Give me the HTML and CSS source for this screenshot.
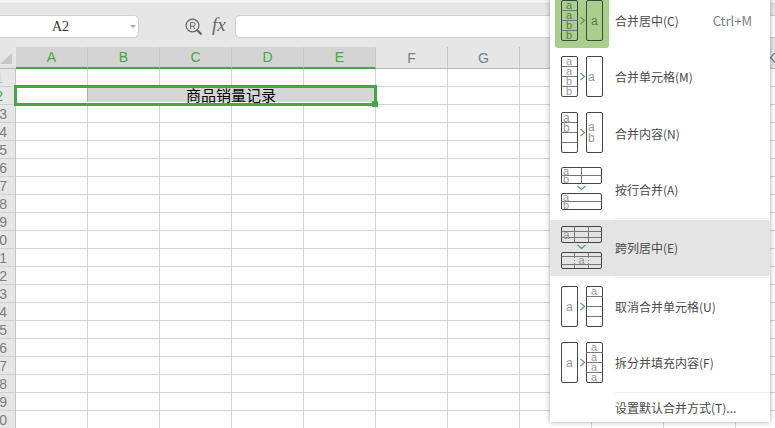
FILE: index.html
```html
<!DOCTYPE html>
<html lang="zh-CN">
<head>
<meta charset="utf-8">
<title>合并居中</title>
<link rel="stylesheet" href="styles.css">
</head>
<body>
<div class="app">
  <div class="top-strip"></div>
  <div class="formula-bar">
    <div class="name-box"><span class="name-text">A2</span><span class="name-arrow"></span></div>
    <div class="formula-tools">
      <svg class="zoom-icon" width="18" height="18" viewBox="0 0 18 18" fill="none" stroke="#666">
        <circle cx="7.5" cy="7.5" r="6.4" stroke-width="1.2"/>
        <path d="M5.5 11V4.5h2.8a1.7 1.7 0 0 1 0 3.6H5.5M8.2 8.1 10 11" stroke-width="1"/>
        <path d="M12 12l4.5 4.5" stroke-width="2.2"/>
      </svg>
      <span class="fx">fx</span>
    </div>
    <div class="formula-input"></div>
  </div>
  <div class="col-header">
    <div class="corner"><span class="corner-tri"></span></div>
    <div class="col sel">A</div>
    <div class="col sel">B</div>
    <div class="col sel">C</div>
    <div class="col sel">D</div>
    <div class="col sel">E</div>
    <div class="col">F</div>
    <div class="col">G</div>
    <div class="col">H</div>
    <div class="col">I</div>
    <div class="col">J</div>
    <div class="col">K</div>
  </div>
  <div class="sheet">
    <div class="row-header">
      <div class="rownum r1"><span>1</span></div>
      <div class="rownum r2"><span>2</span></div>
      <div class="rownum"><span>3</span></div>
      <div class="rownum"><span>4</span></div>
      <div class="rownum"><span>5</span></div>
      <div class="rownum"><span>6</span></div>
      <div class="rownum"><span>7</span></div>
      <div class="rownum"><span>8</span></div>
      <div class="rownum"><span>9</span></div>
      <div class="rownum"><span>10</span></div>
      <div class="rownum"><span>11</span></div>
      <div class="rownum"><span>12</span></div>
      <div class="rownum"><span>13</span></div>
      <div class="rownum"><span>14</span></div>
      <div class="rownum"><span>15</span></div>
      <div class="rownum"><span>16</span></div>
      <div class="rownum"><span>17</span></div>
      <div class="rownum"><span>18</span></div>
      <div class="rownum"><span>19</span></div>
      <div class="rownum"><span>20</span></div>
    </div>
    <div class="grid">
      <div class="selection">
        <div class="sel-first"></div>
        <div class="sel-merged">商品销量记录</div>
        <div class="sel-handle"></div>
      </div>
    </div>
  </div>

  <div class="menu">
    <div class="item">
      <div class="icon-cell active">
        <svg class="ic" width="54" height="56" viewBox="0 0 54 56">
          <rect class="box" x="6.5" y="8.5" width="16" height="40" rx="1.5"/>
          <path class="ln" d="M6.5 18.5h16M6.5 28.5h16M6.5 38.5h16"/>
          <text class="lt" x="11" y="17">a</text><text class="lt" x="11" y="27">a</text><text class="lt" x="11" y="37">b</text><text class="lt" x="11" y="47">b</text>
          <rect class="box" x="31.5" y="8.5" width="16" height="40" rx="1.5"/>
          <text class="lt big" x="36" y="33">a</text>
          <polyline class="chev" points="25.5,25 29.5,28.5 25.5,32"/>
        </svg>
      </div>
      <span class="label">合并居中(C)</span>
      <span class="shortcut">Ctrl+M</span>
    </div>
    <div class="item">
      <div class="icon-cell">
        <svg class="ic" width="54" height="56" viewBox="0 0 54 56">
          <rect class="box" x="6.5" y="8.5" width="16" height="40" rx="1.5"/>
          <path class="ln" d="M6.5 18.5h16M6.5 28.5h16M6.5 38.5h16"/>
          <text class="lt" x="11" y="17">a</text><text class="lt" x="11" y="27">a</text><text class="lt" x="11" y="37">b</text><text class="lt" x="11" y="47">b</text>
          <rect class="box" x="31.5" y="8.5" width="16" height="40" rx="1.5"/>
          <text class="lt big" x="33" y="33">a</text>
          <polyline class="chev" points="25.5,25 29.5,28.5 25.5,32"/>
        </svg>
      </div>
      <span class="label">合并单元格(M)</span>
    </div>
    <div class="item">
      <div class="icon-cell">
        <svg class="ic" width="54" height="56" viewBox="0 0 54 56">
          <rect class="box" x="6.5" y="8.5" width="16" height="40" rx="1.5"/>
          <path class="ln" d="M6.5 18.5h16M6.5 28.5h16M6.5 38.5h16"/>
          <text class="lt big" x="8" y="18">a</text><text class="lt big" x="8" y="28">b</text>
          <rect class="box" x="31.5" y="8.5" width="16" height="40" rx="1.5"/>
          <text class="lt big" x="33" y="27">a</text><text class="lt big" x="33" y="38">b</text>
          <polyline class="chev" points="25.5,25 29.5,28.5 25.5,32"/>
        </svg>
      </div>
      <span class="label low">合并内容(N)</span>
    </div>
    <div class="item">
      <div class="icon-cell">
        <svg class="ic" width="54" height="56" viewBox="0 0 54 56">
          <rect class="box" x="6.5" y="7.5" width="40" height="16" rx="1.5"/>
          <path class="ln" d="M6.5 15.5h40M26.5 7.5v16"/>
          <text class="lt" x="8" y="15">a</text><text class="lt" x="8" y="23">b</text>
          <polyline class="chev" points="22.5,26 26.5,29.5 30.5,26"/>
          <rect class="box" x="6.5" y="33.5" width="40" height="16" rx="1.5"/>
          <path class="ln" d="M6.5 41.5h40"/>
          <text class="lt" x="8" y="41">a</text><text class="lt" x="8" y="49">b</text>
        </svg>
      </div>
      <span class="label low">按行合并(A)</span>
    </div>
    <div class="sep sep-a"></div>
    <div class="item hover">
      <div class="icon-cell">
        <svg class="ic" width="54" height="56" viewBox="0 0 54 56">
          <rect class="box" x="6.5" y="6.5" width="40" height="16" rx="1.5"/>
          <path class="ln" d="M6.5 11.5h40M6.5 17.5h40M19.5 6.5v16M33.5 6.5v16"/>
          <text class="lt big" x="8" y="18.500">a</text>
          <polyline class="chev" points="22.5,25 26.5,28.5 30.5,25"/>
          <rect class="box" x="6.500" y="32.500" width="40" height="16" rx="1.5"/>
          <path class="ln" d="M6.5 36.500h40M6.500 44.500h40M19.500 32.500v4M33.500 32.500v4M19.500 44.500v4M33.500 44.500v4"/>
          <path class="dash" d="M19.500 37v7M33.500 37v7"/>
          <text class="lt" x="23.500" y="44">a</text>
        </svg>
      </div>
      <span class="label high">跨列居中(E)</span>
    </div>
    <div class="sep sep-b"></div>
    <div class="item">
      <div class="icon-cell">
        <svg class="ic" width="54" height="56" viewBox="0 0 54 56">
          <rect class="box" x="6.5" y="8.5" width="16" height="40" rx="1.500"/>
          <text class="lt big" x="11" y="33">a</text>
          <polyline class="chev" points="25.5,25 29.5,28.5 25.5,32"/>
          <rect class="box" x="31.5" y="8.5" width="16" height="40" rx="1.5"/>
          <path class="ln" d="M31.5 18.5h16M31.5 28.5h16M31.5 38.5h16"/>
          <text class="lt" x="36" y="17">a</text>
        </svg>
      </div>
      <span class="label">取消合并单元格(U)</span>
    </div>
    <div class="item">
      <div class="icon-cell">
        <svg class="ic" width="54" height="56" viewBox="0 0 54 56">
          <rect class="box" x="6.5" y="8.5" width="16" height="40" rx="1.5"/>
          <text class="lt big" x="11" y="33">a</text>
          <polyline class="chev" points="25.5,25 29.5,28.5 25.5,32"/>
          <rect class="box" x="31.5" y="8.5" width="16" height="40" rx="1.5"/>
          <path class="ln" d="M31.5 18.5h16M31.5 28.5h16M31.5 38.5h16"/>
          <text class="lt" x="36" y="17">a</text><text class="lt" x="36" y="27">a</text><text class="lt" x="36" y="37">a</text><text class="lt" x="36" y="47">a</text>
        </svg>
      </div>
      <span class="label">拆分并填充内容(F)</span>
    </div>
    <div class="sep sep-c"></div>
    <div class="item-foot"><span class="label">设置默认合并方式(T)...</span></div>
  </div>
</div>
</body>
</html>
```

FILE: styles.css
```css
html, body {
  margin: 0;
  padding: 0;
  width: 775px;
  height: 428px;
  overflow: hidden;
  background: #fff;
}

.app {
  position: relative;
  width: 775px;
  height: 428px;
  overflow: hidden;
  display: flex;
  flex-direction: column;
  font-family: "Liberation Sans", "Noto Sans CJK SC", sans-serif;
}

.top-strip {
  height: 3px;
  background: #f4f4f4;
  border-bottom: 1px solid #e0e0e0;
  flex: none;
}

.formula-bar {
  flex: none;
  height: 43px;
  box-sizing: border-box;
  background: #e6e6e6;
  padding: 11px 0 9px;
  display: flex;
  align-items: stretch;
}

.name-box {
  width: 147px;
  margin-left: -8px;
  box-sizing: border-box;
  background: #fff;
  border: 1px solid #cfcfcf;
  border-radius: 5px;
  display: flex;
  align-items: center;
  flex: none;
}

.name-text {
  font-family: "Liberation Serif", serif;
  font-size: 14px;
  color: #333;
  margin-left: 59px;
}

.name-arrow {
  margin-left: auto;
  margin-right: 2px;
  width: 0;
  height: 0;
  border-left: 3px solid transparent;
  border-right: 3px solid transparent;
  border-top: 3px solid #a8a8a8;
}

.formula-tools {
  width: 96px;
  flex: none;
  display: flex;
  align-items: center;
  box-sizing: border-box;
  padding-left: 46px;
}

.zoom-icon {
  flex: none;
}

.fx {
  font-family: "Liberation Serif", serif;
  font-style: italic;
  font-size: 19px;
  color: #666;
  margin-left: 9px;
  padding-bottom: 3px;
}

.formula-input {
  flex: 1;
  margin-right: -8px;
  background: #fff;
  border: 1px solid #cfcfcf;
  border-radius: 5px;
}

.col-header {
  flex: none;
  display: flex;
  height: 22px;
  background: #e6e6e6;
}

.corner {
  flex: none;
  width: 16px;
  box-sizing: border-box;
  border-bottom: 1px solid #b8b8b8;
  position: relative;
  overflow: hidden;
}

.corner-tri {
  position: absolute;
  right: 4px;
  bottom: 4px;
  width: 0;
  height: 0;
  border-left: 12px solid transparent;
  border-bottom: 11px solid #c6c6c6;
}

.col {
  flex: none;
  width: 72px;
  box-sizing: border-box;
  border-right: 1px solid #c6c6c6;
  border-bottom: 1px solid #b8b8b8;
  display: flex;
  align-items: center;
  justify-content: center;
  font-size: 14px;
  color: #74808c;
}

.col.sel {
  background: #d4d4d4;
  color: #43a648;
  border-bottom: 2px solid #43a648;
}

.sheet {
  flex: 1;
  display: flex;
  min-height: 0;
}

.row-header {
  flex: none;
  width: 16px;
  box-sizing: border-box;
  background: #e6e6e6;
  border-right: 1px solid #c6c6c6;
}

.rownum {
  height: 18px;
  width: 15px;
  overflow: hidden;
  box-sizing: border-box;
  border-bottom: 1px solid #d0d0d0;
  display: flex;
  justify-content: flex-end;
  align-items: center;
  padding-right: 8px;
  font-size: 14px;
  color: #807c78;
}

.rownum span {
  flex: none;
}

.rownum.r1 {
  padding-right: 12px;
  color: #8fc4ea;
}

.rownum.r2 {
  padding-right: 12px;
  color: #43a648;
}

.grid {
  flex: 1;
  position: relative;
  background-image:
    linear-gradient(to right, transparent 71px, #d4d4d4 71px),
    linear-gradient(to bottom, transparent 17px, #d4d4d4 17px);
  background-size: 72px 100%, 100% 18px;
}

.selection {
  position: absolute;
  left: -2px;
  top: 16px;
  width: 363px;
  height: 21px;
  box-sizing: border-box;
  border: 3px solid #43a648;
  display: flex;
  background: #fff;
}

.sel-first {
  flex: none;
  width: 70px;
}

.sel-merged {
  flex: 1;
  height: 14px;
  background: #d6d6d6;
  border-left: 1px solid #b0b0b0;
  font-family: "Noto Sans CJK SC", sans-serif;
  font-size: 15px;
  line-height: 14px;
  color: #000;
  text-align: center;
}

.sel-handle {
  position: absolute;
  right: -4px;
  bottom: -4px;
  width: 6px;
  height: 6px;
  background: #43a648;
}

.menu {
  position: absolute;
  left: 550px;
  top: -8px;
  width: 220px;
  height: 430px;
  background: #fff;
  box-shadow: 0 0 5px rgba(0, 0, 0, .35);
  font-family: "Noto Sans CJK SC", sans-serif;
  font-size: 12px;
  color: #4a4a4a;
}

.item {
  height: 56px;
  display: flex;
  align-items: center;
}

.item.hover {
  background: #e4e4e4;
}

.icon-cell {
  flex: none;
  width: 54px;
  height: 56px;
  margin-left: 5px;
  margin-right: 6px;
  border-radius: 0 0 3px 3px;
}

.icon-cell.active {
  background: #a9cf8c;
}

.ic {
  display: block;
}

.box {
  fill: none;
  stroke: #444;
  stroke-width: 1;
}

.ln {
  fill: none;
  stroke: #777;
  stroke-width: 1;
}

.dash {
  fill: none;
  stroke: #888;
  stroke-width: 1;
  stroke-dasharray: 1 2;
}

.lt {
  font-family: "Liberation Sans", sans-serif;
  font-size: 11px;
  fill: #999;
}

.lt.big {
  font-size: 12px;
}

.active .lt {
  fill: #5c7a4c;
}

.chev {
  fill: none;
  stroke: #5a9a6a;
  stroke-width: 1.2;
}

.label.low {
  padding-top: 2px;
}

.label.high {
  padding-bottom: 2px;
}

.shortcut {
  margin-left: auto;
  margin-right: 18px;
  font-size: 13px;
  color: #7a7f86;
}

.sep {
  height: 1px;
  background: #eeeeee;
  margin-left: 65px;
}

.sep-a {
  margin-top: 2px;
  margin-bottom: 1px;
}

.sep-b {
  margin-top: 1px;
}

.sep-c {
  margin-top: 2px;
}

.item-foot {
  height: 29px;
  display: flex;
  align-items: center;
  padding-left: 65px;
}
```
